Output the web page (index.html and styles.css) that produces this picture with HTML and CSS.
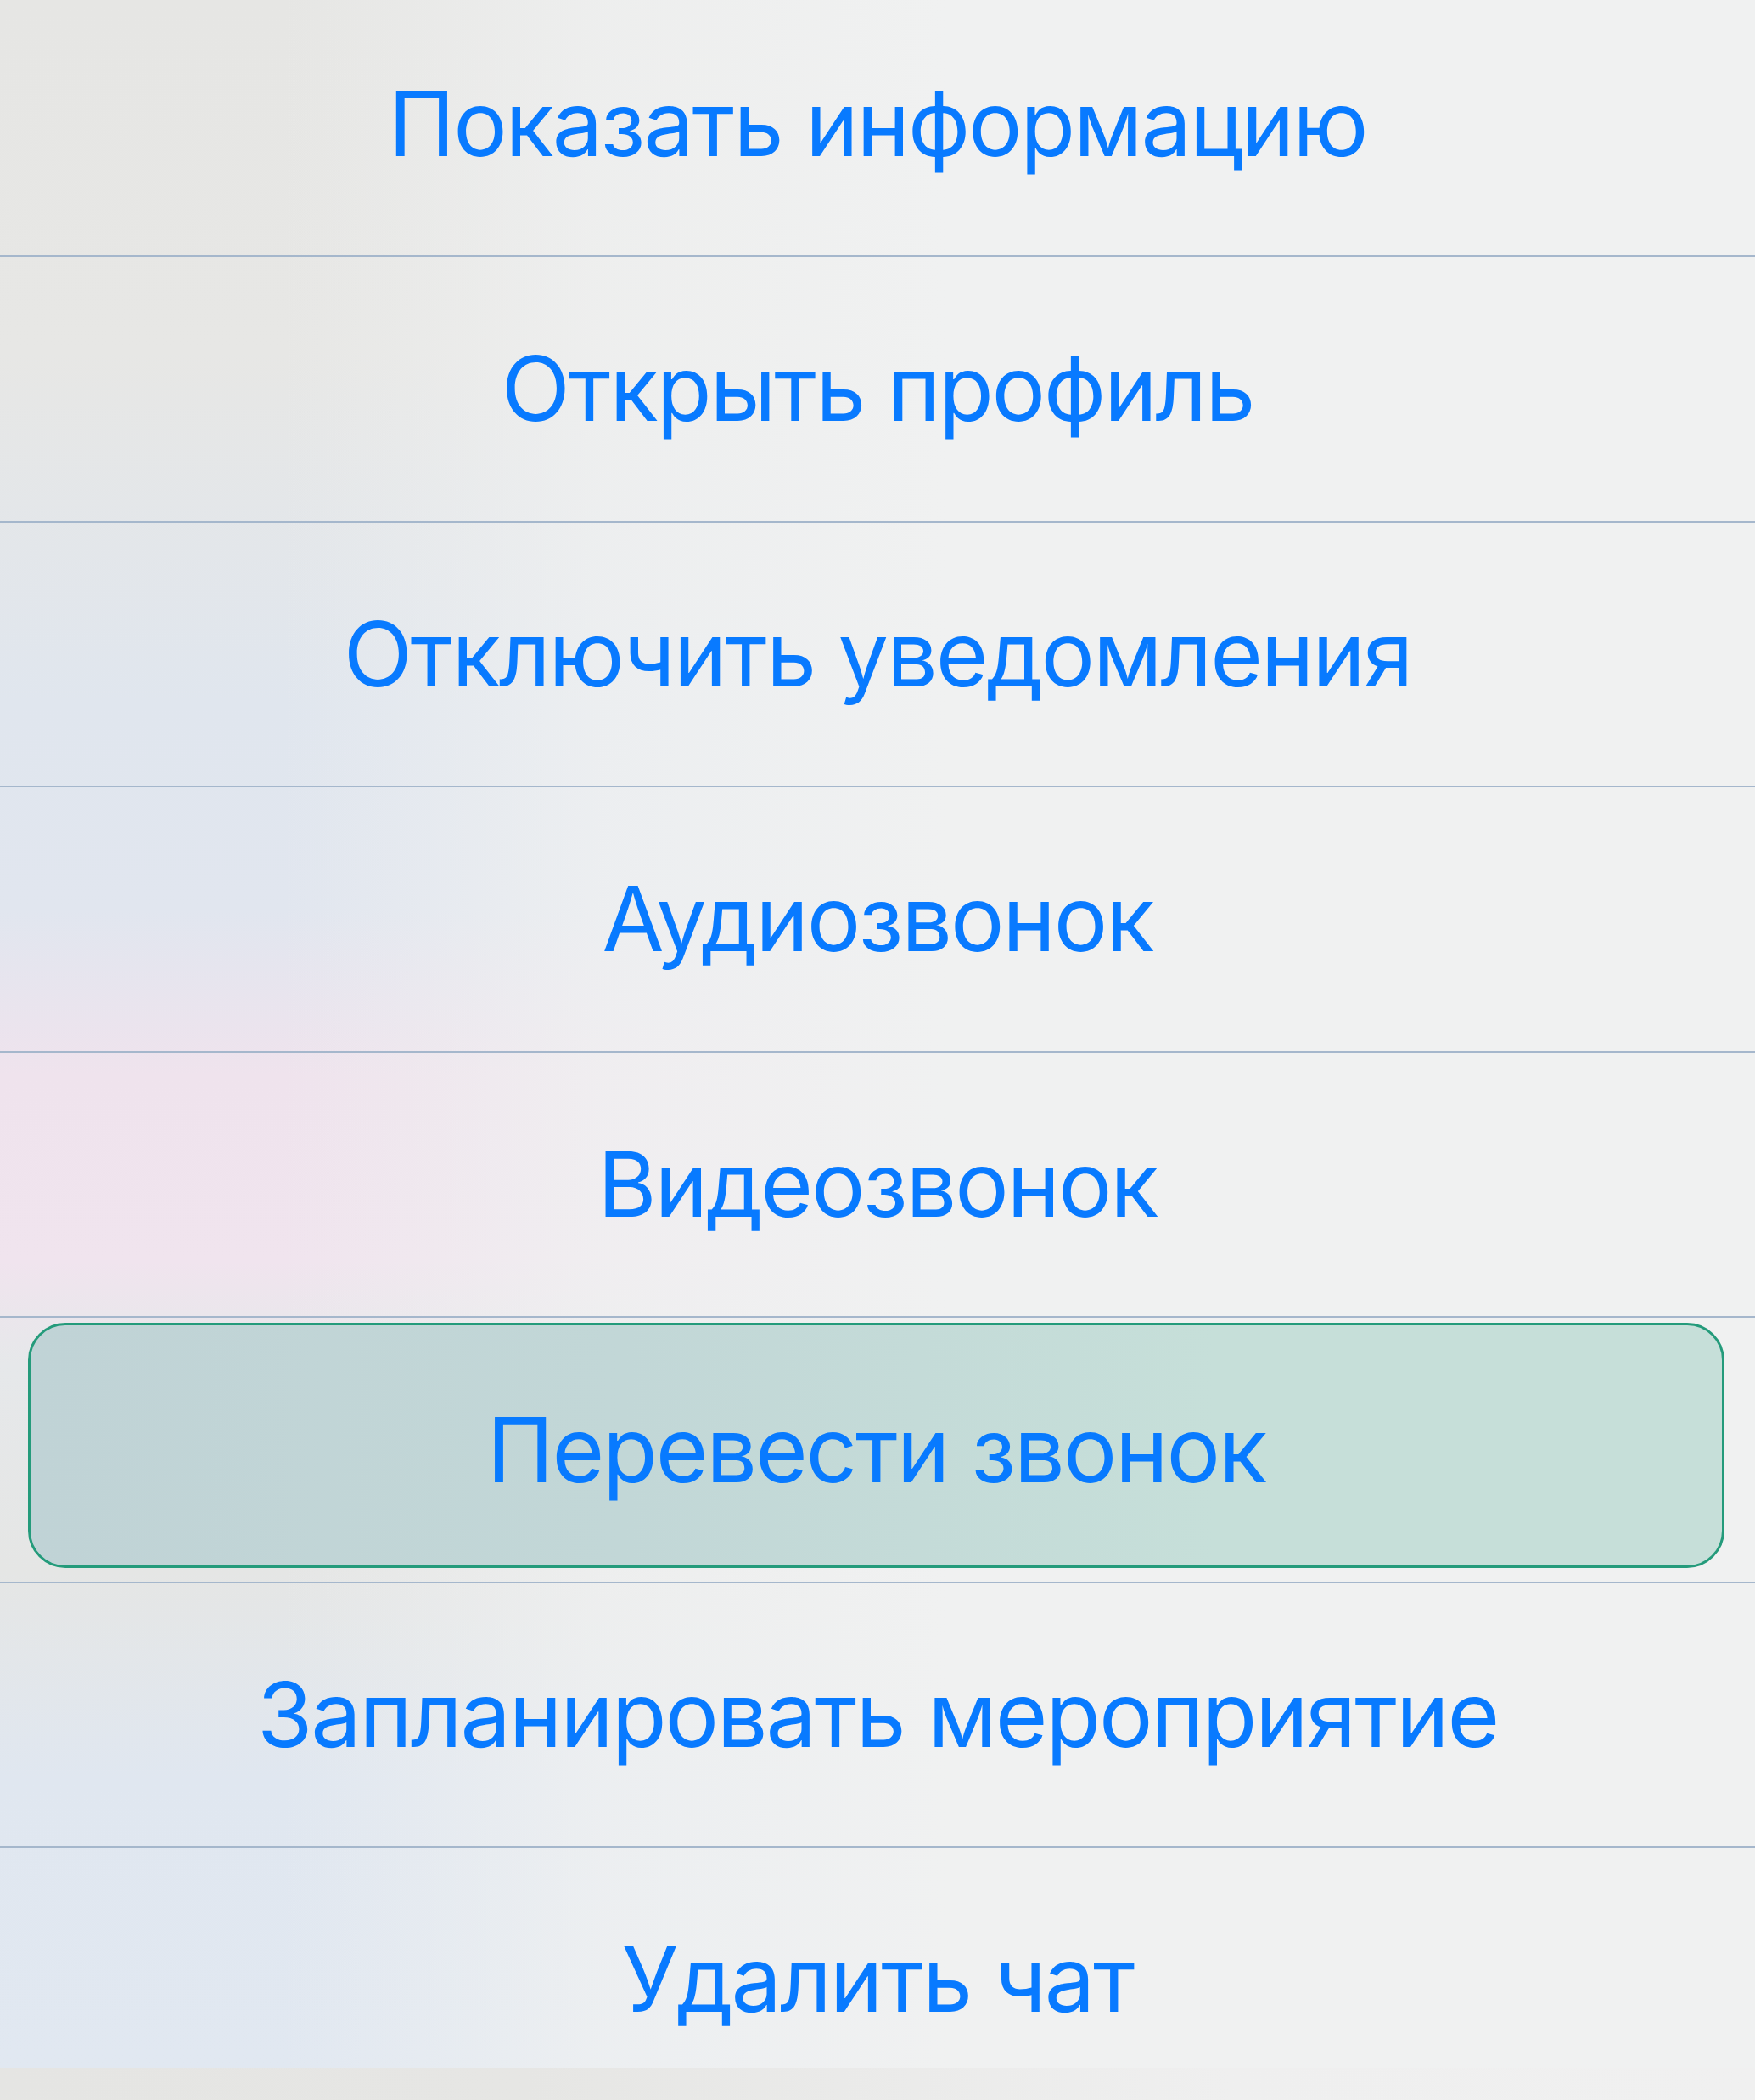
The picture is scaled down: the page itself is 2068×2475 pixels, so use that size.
FILE: index.html
```
<!DOCTYPE html>
<html lang="ru">
<head>
<meta charset="utf-8">
<title>Меню</title>
<link rel="stylesheet" href="styles.css">
</head>
<body>
<div class="sheet">
  <ul class="menu">
    <li class="item"><span class="label">Показать информацию</span></li>
    <li class="item"><span class="label">Открыть профиль</span></li>
    <li class="item"><span class="label">Отключить уведомления</span></li>
    <li class="item"><span class="label">Аудиозвонок</span></li>
    <li class="item"><span class="label">Видеозвонок</span></li>
    <li class="item item-active"><div class="highlight"><span class="label">Перевести звонок</span></div></li>
    <li class="item"><span class="label">Запланировать мероприятие</span></li>
    <li class="item"><span class="label">Удалить чат</span></li>
  </ul>
</div>
<div class="under"></div>
</body>
</html>
```
FILE: styles.css
```
html, body {
  margin: 0;
  padding: 0;
}
body {
  width: 2068px;
  height: 2475px;
  overflow: hidden;
  background: #e9e9e7;
  font-family: Inter, "Liberation Sans", Arial, sans-serif;
}
.sheet {
  height: 2437px;
  overflow: hidden;
  background:
    linear-gradient(to right, rgba(240,240,240,0) 0, rgba(240,240,240,0) 16%, rgba(240,241,241,0.75) 34%, #f0f1f1 54%),
    linear-gradient(to bottom,
      #e6e6e4 0,
      #e7e7e5 17%,
      #e0e6ee 34%,
      #e1e6ef 44%,
      #efe3ed 52%,
      #f0e4ee 61%,
      #e6e8ea 66%,
      #e5e6e5 76%,
      #e0e7f0 86%,
      #e1e8f1 100%);
}
.menu {
  list-style: none;
  margin: -9.5px 0 0 0;
  padding: 0;
}
.item {
  box-sizing: border-box;
  height: 312.5px;
  border-bottom: 2px solid #a5b7cc;
  display: flex;
  align-items: center;
  justify-content: center;
}
.label {
  color: #087aff;
  font-size: 106px;
  letter-spacing: -2.2px;
  line-height: 1;
  white-space: nowrap;
}
.item-active {
  align-items: stretch;
  justify-content: stretch;
  padding: 6px 36px 16px 33px;
}
.highlight {
  flex: 1;
  box-sizing: border-box;
  border: 3px solid #249b7b;
  border-radius: 44px;
  background: linear-gradient(to right, #c0d3d6 0, #c2d7d7 35%, #c6dfd9 70%, #c6dfd9 100%);
  display: flex;
  align-items: center;
  justify-content: center;
  padding-top: 11px;
}
.under {
  height: 38px;
  background: linear-gradient(to right, #e5e5e3 0, #e6e6e4 30%, #efefef 70%, #f0f0f0 100%);
}
```
